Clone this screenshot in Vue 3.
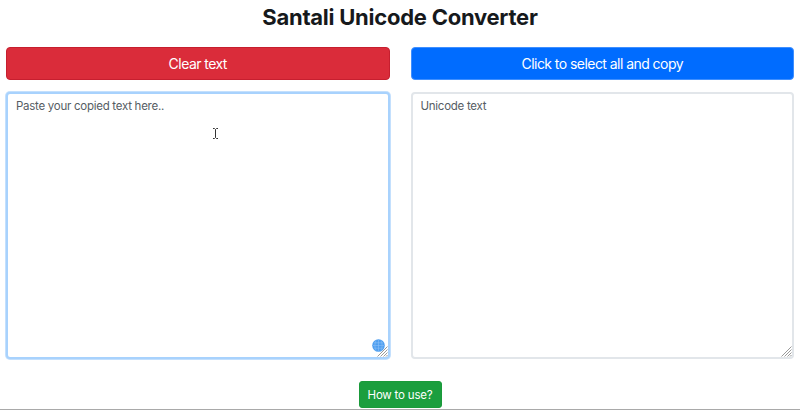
<template>
  <div class="page">
    <h1 class="title">Santali Unicode Converter</h1>
    <div class="columns">
      <div class="col">
        <button class="btn btn-clear" type="button">Clear text</button>
        <div class="box">
          <textarea class="field field-focus" placeholder="Paste your copied text here.."></textarea>
          <svg class="cursor" width="7" height="11" viewBox="0 0 7 11" aria-hidden="true">
            <path d="M1 .5h1.500l1 1 1-1H6M3.500 1.500v8M1 10.500h1.500l1-1 1 1H6" fill="none" stroke="#333" stroke-width="1" />
          </svg>
          <svg class="globe" width="13" height="13" viewBox="0 0 13 13" aria-hidden="true">
            <circle cx="6.500" cy="6.500" r="6.300" fill="#4f9ff0" />
            <path d="M6.500 1v11M1 6.500h11M2 3.800h9M2 9.200h9M4 1.500c-1.500 3-1.500 7 0 10M9 1.500c1.500 3 1.500 7 0 10" fill="none" stroke="#8cc0f6" stroke-width=".6" />
          </svg>
          <svg class="grip" width="11" height="11" viewBox="0 0 11 11" aria-hidden="true">
            <path d="M.5 10.500l10-10M3.500 10.500l7-7M6.500 10.500l4-4M9 10.500l1.500-1.500" fill="none" stroke="#999" stroke-width="1" />
          </svg>
        </div>
      </div>
      <div class="col">
        <button class="btn btn-copy" type="button">Click to select all and copy</button>
        <div class="box">
          <textarea class="field" placeholder="Unicode text"></textarea>
          <svg class="grip" width="11" height="11" viewBox="0 0 11 11" aria-hidden="true">
            <path d="M.5 10.500l10-10M3.500 10.500l7-7M6.500 10.500l4-4M9 10.500l1.500-1.500" fill="none" stroke="#999" stroke-width="1" />
          </svg>
        </div>
      </div>
    </div>
    <div class="footer">
      <button class="btn-help" type="button">How to use?</button>
    </div>
  </div>
</template>

<script setup>
</script>

<style>
html,
body {
  margin: 0;
  background: #fff;
}
</style>

<style scoped>
.page {
  height: 410px;
  box-sizing: border-box;
  border-bottom: 1px solid #a9a9a9;
  overflow: hidden;
  font-family: Inter, "Liberation Sans", sans-serif;
  display: flex;
  flex-direction: column;
}

.title {
  margin: 0;
  padding-top: 3px;
  height: 47px;
  box-sizing: border-box;
  text-align: center;
  font-size: 22px;
  line-height: 28px;
  font-weight: 700;
  letter-spacing: -0.25px;
  color: #16191c;
}

.columns {
  display: flex;
  gap: 21px;
  padding: 0 6px;
}

.col {
  flex: 1;
  min-width: 0;
  display: flex;
  flex-direction: column;
  gap: 12px;
}

.btn {
  height: 33px;
  width: 100%;
  border-radius: 4px;
  border: 1px solid;
  color: #fff;
  font-family: inherit;
  font-size: 14px;
  letter-spacing: -0.55px;
  padding: 0;
}

.btn-clear {
  background: #da2c3a;
  border-color: #c61f2f;
}

.btn-copy {
  background: #006cff;
  border-color: #3f8fff;
}

.box {
  position: relative;
  height: 267px;
}

.field {
  display: block;
  width: 100%;
  height: 100%;
  box-sizing: border-box;
  border: 2px solid #e2e6ea;
  border-radius: 4px;
  padding: 3px 8px;
  font-family: inherit;
  font-size: 11.5px;
  letter-spacing: -0.27px;
  line-height: 18px;
  background: #fff;
  outline: none;
  resize: none;
}

.field::placeholder {
  color: #565d64;
  opacity: 1;
}

.field-focus {
  border-color: #a8d2fd;
  box-shadow: 0 0 0 1px #c4e0fd;
}

.cursor {
  position: absolute;
  left: 206px;
  top: 36px;
}

.globe {
  position: absolute;
  left: 366px;
  top: 247px;
}

.grip {
  position: absolute;
  right: 2px;
  bottom: 2px;
}

.footer {
  display: flex;
  justify-content: center;
  padding-top: 22px;
}

.btn-help {
  width: 83px;
  height: 27px;
  border: 1px solid #1a9a3a;
  border-radius: 3px;
  background: #1b9e3e;
  color: #fff;
  font-family: inherit;
  font-size: 11.5px;
  letter-spacing: -0.2px;
  padding: 0;
}
</style>
